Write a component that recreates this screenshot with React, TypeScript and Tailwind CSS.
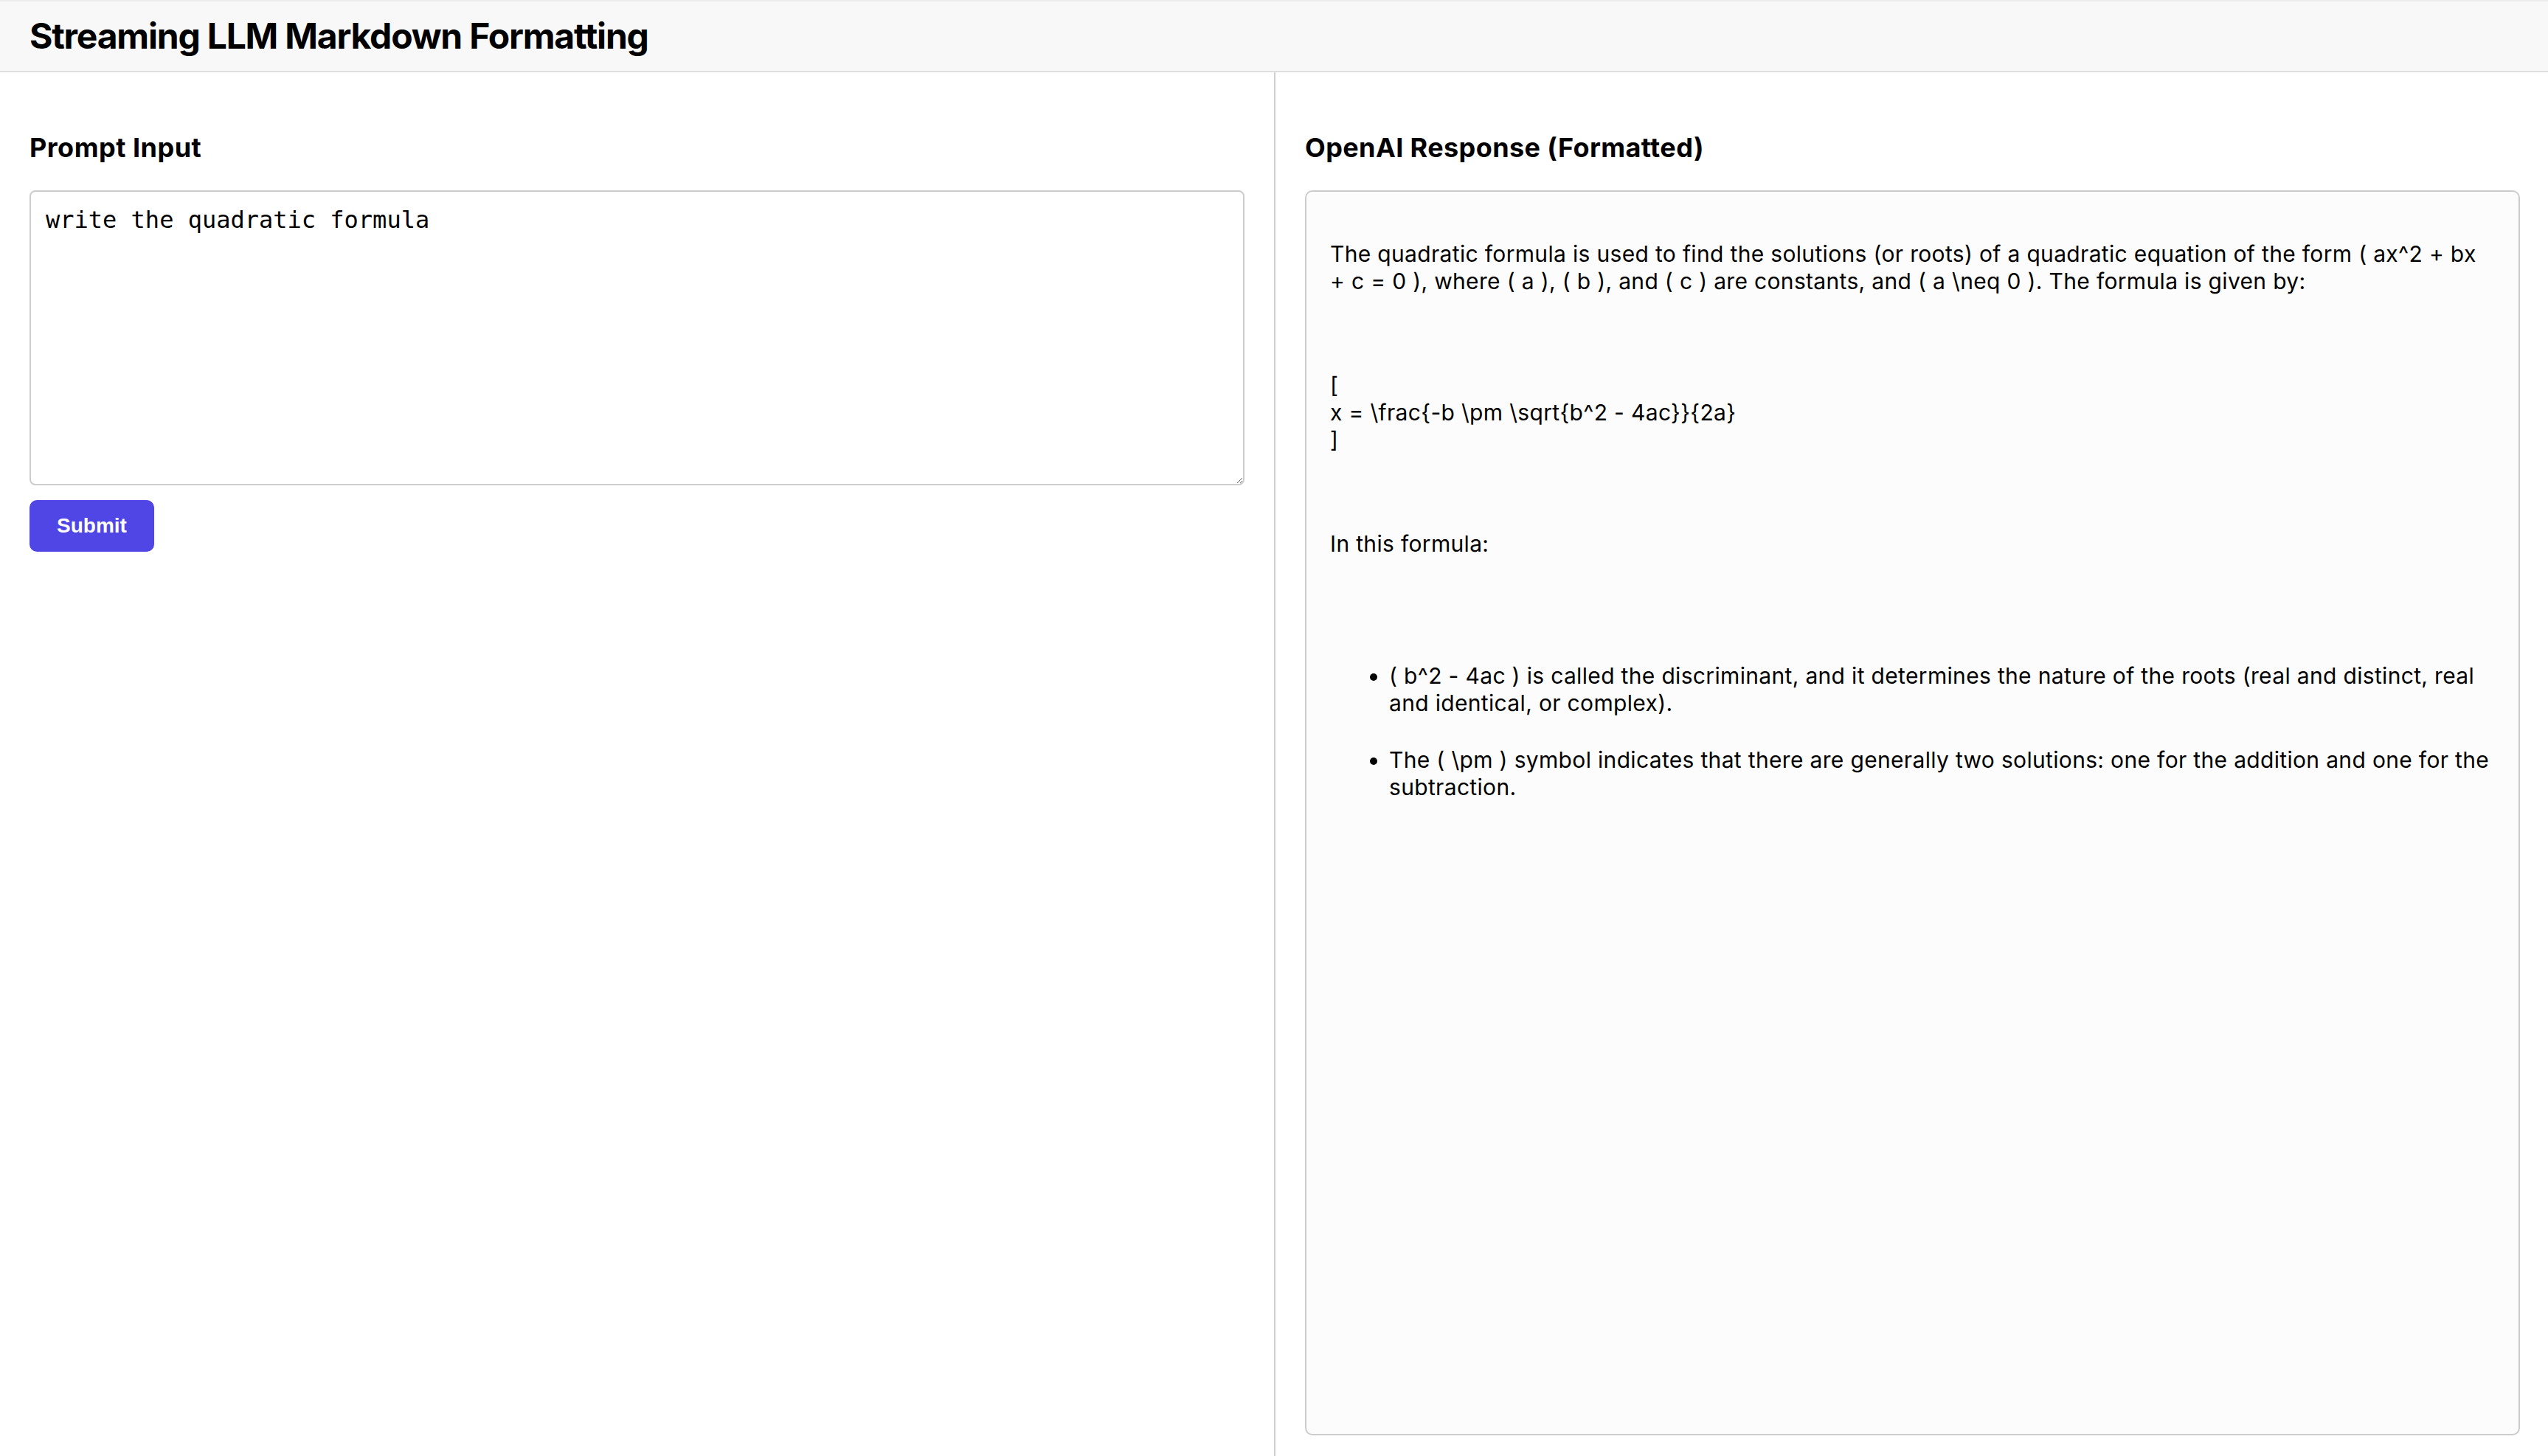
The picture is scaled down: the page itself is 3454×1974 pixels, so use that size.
import React from "react";

const P1A =
  "The quadratic formula is used to find the solutions (or roots) of a quadratic equation of the form ( ax^2 + bx";
const P1B =
  "+ c = 0 ), where ( a ), ( b ), and ( c ) are constants, and ( a \\neq 0 ). The formula is given by:";
const FORMULA = "x = \\frac{-b \\pm \\sqrt{b^2 - 4ac}}{2a}";

const bullets: [string, string][] = [
  [
    "( b^2 - 4ac ) is called the discriminant, and it determines the nature of the roots (real and distinct, real",
    "and identical, or complex).",
  ],
  [
    "The ( \\pm ) symbol indicates that there are generally two solutions: one for the addition and one for the",
    "subtraction.",
  ],
];

export default function App() {
  return (
    <div className="flex h-screen flex-col overflow-hidden bg-white font-['Inter','Noto_Sans',sans-serif] text-black">
      <header className="flex h-[98px] shrink-0 items-center border-y-2 border-t-[#ececec] border-b-[#dedede] bg-[#f8f8f8] px-[40px]">
        <h1 className="text-[48px] font-bold leading-none tracking-[-1.2px]">Streaming LLM Markdown Formatting</h1>
      </header>

      <main className="flex min-h-0 flex-1">
        <section className="w-[1729px] shrink-0 border-r-2 border-[#d0d0d0] px-[40px] pt-[80px]">
          <h2 className="text-[36px] font-bold leading-[44px] tracking-[0.5px]">Prompt Input</h2>
          <textarea
            className="mt-[36px] block h-[400px] w-full resize-y rounded-[8px] border-2 border-[#cccccc] bg-white p-[20px] font-['DejaVu_Sans_Mono',monospace] text-[32px] leading-[37px] text-black outline-none"
            defaultValue="write the quadratic formula"
          />
          <button
            type="button"
            className="mt-[20px] h-[70px] w-[169px] rounded-[10px] bg-[#4f46e5] font-['Liberation_Sans',Arial,sans-serif] text-[28px] font-bold text-white"
          >
            Submit
          </button>
        </section>

        <section className="flex min-w-0 flex-1 flex-col pl-[40px] pr-[38px] pt-[80px] pb-[28px]">
          <h2 className="text-[36px] font-bold leading-[44px] tracking-[0.4px]">OpenAI Response (Formatted)</h2>
          <div className="mt-[36px] flex-1 overflow-hidden rounded-[10px] border-2 border-[#cccccc] bg-[#fcfcfc] px-[32px] pt-[66px] text-[30px] leading-[37px] tracking-[0.33px] text-black">
            <p className="whitespace-nowrap">
              {P1A}
              <br />
              {P1B}
            </p>
            <p className="mt-[104px] whitespace-nowrap">
              [
              <br />
              {FORMULA}
              <br />]
            </p>
            <p className="mt-[104px]">In this formula:</p>
            <ul className="mt-[142px] list-disc pl-[80px]">
              {bullets.map(([a, b], i) => (
                <li key={i} className={i > 0 ? "mt-[40px] whitespace-nowrap" : "whitespace-nowrap"}>
                  {a}
                  <br />
                  {b}
                </li>
              ))}
            </ul>
          </div>
        </section>
      </main>
    </div>
  );
}
